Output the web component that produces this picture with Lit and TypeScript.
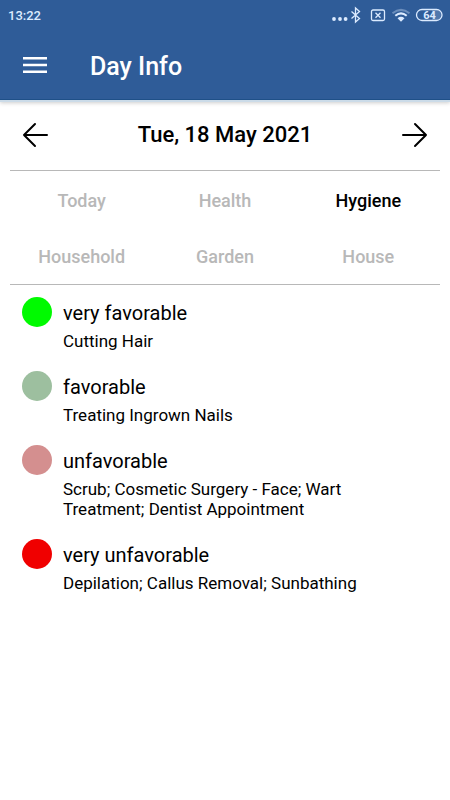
import { LitElement, html, css } from "lit";
import { customElement, state } from "lit/decorators.js";
import { classMap } from "lit/directives/class-map.js";

interface Rating {
  tone: string;
  title: string;
  items: string[];
}

const TABS = ["Today", "Health", "Hygiene", "Household", "Garden", "House"];

const RATINGS: Rating[] = [
  { tone: "best", title: "very favorable", items: ["Cutting Hair"] },
  { tone: "good", title: "favorable", items: ["Treating Ingrown Nails"] },
  {
    tone: "bad",
    title: "unfavorable",
    items: ["Scrub", "Cosmetic Surgery - Face", "Wart Treatment", "Dentist Appointment"],
  },
  { tone: "worst", title: "very unfavorable", items: ["Depilation", "Callus Removal", "Sunbathing"] },
];

@customElement("status-bar")
class StatusBar extends LitElement {
  static styles = css`
    :host {
      display: flex;
      justify-content: space-between;
      align-items: center;
      height: 30px;
      padding: 0 7px 0 8px;
      color: #dcebff;
    }
    .time {
      font-size: 13px;
      font-weight: 500;
    }
    .icons {
      display: block;
    }
    .level {
      font-size: 11px;
      font-weight: 700;
    }
  `;
  render() {
    return html`
      <span class="time">13:22</span>
      <svg class="icons" width="112" height="18" viewBox="0 0 112 18" fill="none" stroke="currentColor">
        <g fill="currentColor" stroke="none">
          <circle cx="3" cy="13" r="1.9" />
          <circle cx="9" cy="13" r="1.9" />
          <circle cx="14.6" cy="13" r="1.9" />
        </g>
        <path d="M20.5 5.5l8 7-4 3.500V2l4 3.500-8 7" stroke-width="1.3" />
        <rect x="40.5" y="4" width="13" height="10.500" rx="1.5" stroke-width="1.3" />
        <path d="M44.5 6.800l5 5M49.500 6.800l-5 5" stroke-width="1.3" />
        <g stroke-width="2">
          <path d="M61.500 7.200Q70 0.500 78.500 7.200" opacity=".35" />
          <path d="M64.300 9.800Q70 5 75.700 9.800" />
        </g>
        <path d="M66.500 12.200Q70 9.500 73.500 12.200L70 15.800z" fill="currentColor" stroke="none" />
        <path d="M101 4h4q5 0 5 5t-5 5h-4z" fill="currentColor" stroke="none" opacity=".2" />
        <rect x="85.500" y="3.500" width="25.500" height="11" rx="5.500" stroke-width="1.3" />
        <text class="level" x="98.500" y="13" text-anchor="middle" fill="currentColor" stroke="none">64</text>
      </svg>
    `;
  }
}

@customElement("rating-row")
class RatingRow extends LitElement {
  static properties = { rating: { attribute: false } };
  declare rating: Rating;
  static styles = css`
    :host {
      display: grid;
      grid-template-columns: 30px 1fr;
      column-gap: 11px;
    }
    .dot {
      width: 30px;
      height: 30px;
      border-radius: 50%;
    }
    .best { background: #00fa00; }
    .good { background: #9dbf9f; }
    .bad { background: #d48f8f; }
    .worst { background: #f00000; }
    .title {
      margin: 0 0 2px;
      font-size: 20px;
      font-weight: 400;
      line-height: 32px;
    }
    .list {
      margin: 0;
      font-size: 17px;
      line-height: 20px;
    }
  `;
  render() {
    return html`
      <span class="dot ${this.rating.tone}"></span>
      <div>
        <h2 class="title">${this.rating.title}</h2>
        <p class="list">${this.rating.items.join("; ")}</p>
      </div>
    `;
  }
}

@customElement("app-root")
class AppRoot extends LitElement {
  @state() private selected = "Hygiene";

  static styles = css`
    :host {
      display: block;
      min-height: 100vh;
      background: #fff;
      color: #000;
      font-family: Roboto, "Noto Sans", sans-serif;
    }
    button {
      margin: 0;
      padding: 0;
      border: 0;
      background: none;
      color: inherit;
      font: inherit;
      cursor: pointer;
    }
    svg {
      display: block;
    }
    .header {
      background: #2f5c98;
      color: #fff;
      border-bottom: 1px solid #1f5088;
      box-shadow: 0 2px 0 #cbdbe8, 0 3px 4px rgba(0, 0, 0, 0.2);
    }
    .bar {
      display: flex;
      align-items: center;
      gap: 43px;
      height: 69px;
      padding: 0 23px;
    }
    .heading {
      margin: 0;
      padding-top: 4px;
      font-size: 25px;
      font-weight: 500;
      line-height: 32px;
    }
    .main {
      padding: 0 10px;
    }
    .date {
      display: flex;
      align-items: center;
      justify-content: space-between;
      height: 70px;
      padding: 0 12px;
      border-bottom: 1px solid #b8b8b8;
    }
    .day {
      font-size: 22px;
      font-weight: 500;
      line-height: 28px;
    }
    .tabs {
      display: grid;
      grid-template-columns: repeat(3, 1fr);
      padding-bottom: 1px;
      border-bottom: 1px solid #b8b8b8;
    }
    .tab {
      height: 56px;
      padding-top: 2px;
      font-size: 18px;
      font-weight: 500;
      color: #b8b8b8;
    }
    .active {
      color: #000;
    }
    .ratings {
      display: grid;
      gap: 20px;
      padding: 12px 30px 12px 12px;
    }
  `;

  render() {
    return html`
      <header class="header">
        <status-bar></status-bar>
        <div class="bar">
          <button aria-label="Menu">
            <svg width="24" height="18" viewBox="0 0 24 18" fill="currentColor">
              <path d="M0 1h24v2.500H0zM0 7.700h24v2.500H0zM0 14.500h24V17H0z" />
            </svg>
          </button>
          <h1 class="heading">Day Info</h1>
        </div>
      </header>
      <main class="main">
        <div class="date">
          <button aria-label="Previous day">
            <svg width="26" height="26" viewBox="0 0 26 26" fill="none" stroke="currentColor" stroke-width="2" stroke-linecap="round" stroke-linejoin="round">
              <path d="M25 13H2M13 2L2 13l11 11" />
            </svg>
          </button>
          <span class="day">Tue, 18 May 2021</span>
          <button aria-label="Next day">
            <svg width="26" height="26" viewBox="0 0 26 26" fill="none" stroke="currentColor" stroke-width="2" stroke-linecap="round" stroke-linejoin="round">
              <path d="M1 13h23M13 2l11 11-11 11" />
            </svg>
          </button>
        </div>
        <nav class="tabs">
          ${TABS.map(
            (name) => html`<button
              class=${classMap({ tab: true, active: name === this.selected })}
              aria-pressed=${name === this.selected}
              @click=${() => (this.selected = name)}
            >${name}</button>`
          )}
        </nav>
        <section class="ratings">
          ${RATINGS.map((rating) => html`<rating-row .rating=${rating}></rating-row>`)}
        </section>
      </main>
    `;
  }
}
